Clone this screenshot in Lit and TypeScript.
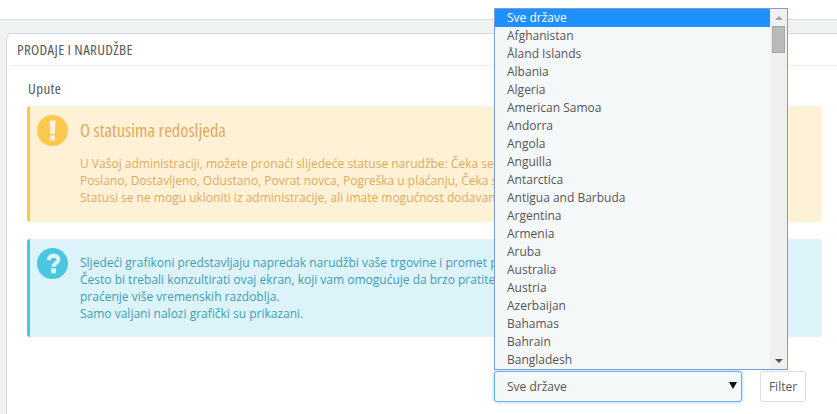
import { LitElement, html, css } from "lit";
import { customElement } from "lit/decorators.js";

const COUNTRIES = ["Sve države","Afghanistan","Åland Islands","Albania","Algeria","American Samoa","Andorra","Angola","Anguilla","Antarctica","Antigua and Barbuda","Argentina","Armenia","Aruba","Australia","Austria","Azerbaijan","Bahamas","Bahrain","Bangladesh"];

@customElement("app-root")
export class AppRoot extends LitElement {
  static styles = css`
    :host { display: block; width: 837px; height: 414px; overflow: hidden; position: relative; background: #fff; font-family: "Open Sans", sans-serif; font-size: 12px; color: #555; }
    .topbar { height: 19px; background: #fff; border-bottom: 1px solid #d9dbdd; }
    .page { background: #eff1f2; height: 394px; padding: 13px 0 0 6px; box-sizing: border-box; }
    .panel { background: #fff; border: 1px solid #d3d8db; border-right: none; border-bottom: none; border-radius: 5px 0 0 0; height: 381px; padding: 0 0 0 4px; box-sizing: border-box; }
    .head { height: 31px; border-bottom: 1px solid #eee; font-family: "Open Sans", sans-serif; font-stretch: 75%; font-size: 15px; letter-spacing: .33px; line-height: 31px; color: #5a5a5a; padding-left: 6px; }
    .body { padding: 12px 0 0 16px; width: 811px; box-sizing: border-box; }
    .h3 { font-family: "Open Sans", sans-serif; font-stretch: 75%; font-size: 15px; letter-spacing: .4px; line-height: 20px; height: 20px; color: #5a5a5a; margin-bottom: 8px; padding-left: 1px; }
    .alert { display: flex; gap: 12px; border-left: 3px solid; border-radius: 3px; padding: 9px 10px 0 7px; box-sizing: border-box; }
    .warn { background: #fff1d6; border-color: #fcc94f; color: #e0ab5e; height: 116px; margin-bottom: 17px; }
    .info { background: #dcf4f9; border-color: #4ac7e0; color: #3f9db8; height: 98px; margin-bottom: 34px; }
    .icon { width: 31px; height: 31px; flex: none; display: block; }
    .title { font-family: "Open Sans", sans-serif; font-stretch: 75%; font-size: 18.5px; line-height: 24px; margin: 3px 0 13px; }
    .lines { line-height: 17px; white-space: nowrap; width: 414px; overflow: hidden; }
    .info .lines { padding-top: 6px; }
    .filters { display: flex; margin-left: 467px; gap: 18px; }
    .select { width: 248px; height: 31px; box-sizing: border-box; border: 1px solid #66afe9; border-radius: 3px; background: #f5f8f9; box-shadow: 0 0 4px rgba(102,175,233,.6); display: flex; align-items: center; justify-content: space-between; padding: 0 4px 0 12px; color: #555; }
    .arrow { width: 0; height: 0; border-left: 4px solid transparent; border-right: 4px solid transparent; border-top: 7px solid #111; margin-top: -3px; }
    .btn { width: 46px; height: 31px; box-sizing: border-box; border: 1px solid #dcdfe1; border-radius: 3px; background: #fff; color: #555; display: flex; align-items: center; justify-content: center; }
    .dropdown { position: absolute; left: 494px; top: 8px; width: 294px; height: 362px; box-sizing: border-box; border: 1px solid #7b9bd6; background: #f5f8f9; display: flex; }
    .list { flex: 1; }
    .opt { height: 18px; line-height: 18px; padding-left: 12px; color: #555; white-space: nowrap; }
    .opt.sel { background: #1e90ff; color: #fff; }
    .sb { width: 17px; background: #f0f0f0; display: flex; flex-direction: column; align-items: center; position: relative; }
    .up, .down { width: 0; height: 0; border-left: 4px solid transparent; border-right: 4px solid transparent; }
    .up { border-bottom: 4px solid #a3a3a3; margin-top: 7px; }
    .down { border-top: 4px solid #505050; position: absolute; bottom: 6px; }
    .thumb { width: 13px; height: 27px; background: #b9b9b9; border: 1px solid #a8a8a8; box-sizing: border-box; margin-top: 6px; }
  `;
  render() {
    return html`
      <div class="topbar"></div>
      <div class="page"><div class="panel">
        <div class="head">PRODAJE I NARUDŽBE</div>
        <div class="body">
          <div class="h3">Upute</div>
          <div class="alert warn">
            <svg class="icon" viewBox="0 0 31 31"><circle cx="15.5" cy="15.5" r="15.5" fill="#fcc94f"/><path d="M12.500 5.500h6l-.7 13.500h-4.600z" fill="#fff1d6"/><rect x="13" y="20.300" width="5" height="5" fill="#fff1d6"/></svg>
            <div>
              <div class="title">O statusima redosljeda</div>
              <div class="lines">U Vašoj administraciji, možete pronaći slijedeće statuse narudžbe: Čeka se<br>Poslano, Dostavljeno, Odustano, Povrat novca, Pogreška u plaćanju, Čeka s<br>Statusi se ne mogu ukloniti iz administracije, ali imate mogućnost dodavan</div>
            </div>
          </div>
          <div class="alert info">
            <svg class="icon" viewBox="0 0 31 31"><circle cx="15.5" cy="15.5" r="15.5" fill="#4ac7e0"/><path d="M12 12.200C12 9.300 13.800 7.600 16.500 7.600C19.300 7.600 21.300 9.200 21.300 11.500C21.300 13.700 19.600 14.600 18.300 15.600C17.200 16.400 16.600 17.100 16.600 18.800" fill="none" stroke="#dcf4f9" stroke-width="4.200"/><rect x="14" y="20.300" width="5" height="5" fill="#dcf4f9"/></svg>
            <div class="lines">Sljedeći grafikoni predstavljaju napredak narudžbi vaše trgovine i promet p<br>Često bi trebali konzultirati ovaj ekran, koji vam omogućuje da brzo pratite<br>praćenje više vremenskih razdoblja.<br>Samo valjani nalozi grafički su prikazani.</div>
          </div>
          <div class="filters">
            <div class="select"><span>Sve države</span><span class="arrow"></span></div>
            <div class="btn">Filter</div>
          </div>
        </div>
      </div></div>
      <div class="dropdown">
        <div class="list">${COUNTRIES.map((c, i) => html`<div class="opt ${i === 0 ? "sel" : ""}">${c}</div>`)}</div>
        <div class="sb"><span class="up"></span><span class="thumb"></span><span class="down"></span></div>
      </div>
    `;
  }
}
